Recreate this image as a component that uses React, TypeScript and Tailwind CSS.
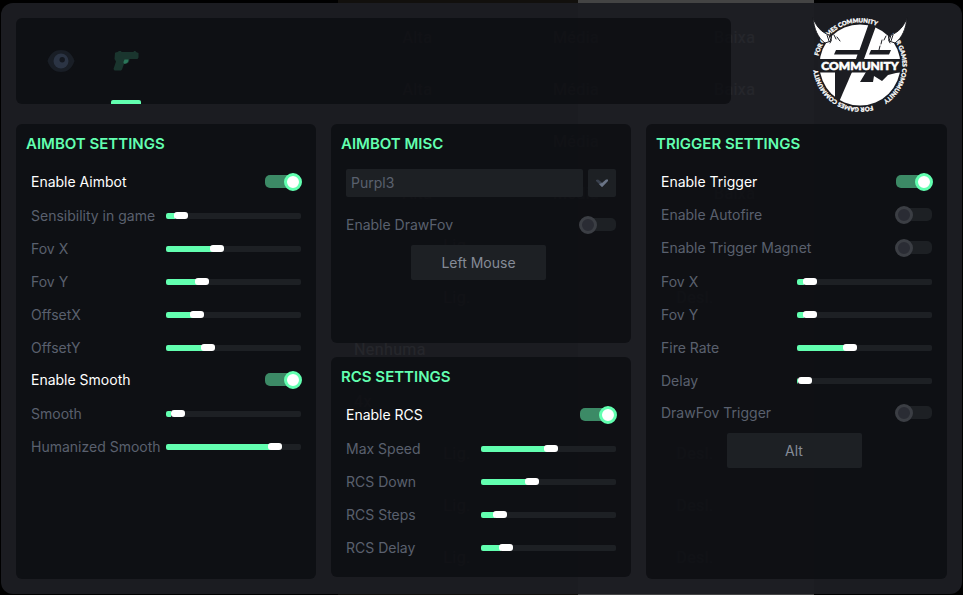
import { useState } from "react";
import type { CSSProperties, ReactNode } from "react";

/* Rows of the game menu that shimmer through the translucent overlay. */
const backdropRows: string[][] = [
  ["Alta", "Média", "Baixa"],
  ["Alta", "Média", "Baixa"],
  ["", "Média", ""],
  ["Alta", "Média", "Baixa"],
  ["Lig.", ""],
  ["Lig.", "Desl."],
  ["Nenhuma"],
  ["4x"],
  ["Lig.", "Desl."],
  ["Lig.", "Desl."],
  ["Lig.", "Desl."],
];

function Backdrop() {
  return (
    <div aria-hidden="true" className="absolute inset-0 overflow-hidden bg-black">
      <div className="ml-[338px] flex h-full w-[476px] flex-col bg-[linear-gradient(90deg,#12100d_240px,#444444_240px)] pt-3 font-['Roboto','Liberation_Sans',sans-serif] text-base leading-4 tracking-wide text-white">
        {backdropRows.map((cells, i) => (
          <div key={i} className="flex h-[52px] shrink-0 items-center">
            {cells.map((cell, j) => (
              <span
                key={j}
                className={cells.length === 1 ? "pl-4" : "flex-1 text-center"}
              >
                {cell}
              </span>
            ))}
          </div>
        ))}
      </div>
    </div>
  );
}

function Panel({ title, className = "", children }: { title: string; className?: string; children: ReactNode }) {
  return (
    <section className={`rounded-md bg-[#0b0c10]/75 pt-2 pb-[14px] ${className}`}>
      <h2 className="mb-[9px] px-[10px] text-[15px] leading-6 font-semibold text-[#62ffb0]">{title}</h2>
      <div className="px-[15px]">{children}</div>
    </section>
  );
}

function Toggle({ label, on = false }: { label: string; on?: boolean }) {
  const [checked, setChecked] = useState(on);
  return (
    <label
      className={`flex h-[33px] items-center justify-between text-sm ${checked ? "text-white" : "text-[#5a606e]"}`}
    >
      {label}
      <input
        type="checkbox"
        checked={checked}
        onChange={(e) => setChecked(e.target.checked)}
        className="flex h-[13px] w-9 appearance-none items-center rounded-[5px] bg-[#1d2024] before:-ml-px before:size-[18px] before:shrink-0 before:rounded-full before:border-3 before:border-[#3b3e44] before:bg-[#2a2c34] checked:bg-[#3c8a66] checked:before:ml-[19px] checked:before:border-[#62ffb0] checked:before:bg-white"
      />
    </label>
  );
}

function Slider({ label, start }: { label: string; start: number }) {
  const [value, setValue] = useState(start);
  const fill: CSSProperties = {
    background: `linear-gradient(90deg, #62ffb0 ${value}%, #1d2024 ${value}%)`,
  };
  return (
    <label className="flex h-[33px] items-center justify-between pt-[2px] text-sm whitespace-nowrap text-[#5a606e]">
      {label}
      <input
        type="range"
        min={0}
        max={100}
        value={value}
        onChange={(e) => setValue(Number(e.target.value))}
        style={fill}
        className="h-[6px] w-1/2 appearance-none rounded-xs [&::-webkit-slider-thumb]:h-[7px] [&::-webkit-slider-thumb]:w-[14px] [&::-webkit-slider-thumb]:appearance-none [&::-webkit-slider-thumb]:rounded-[3px] [&::-webkit-slider-thumb]:bg-white"
      />
    </label>
  );
}

function KeyButton({ children }: { children: ReactNode }) {
  return (
    <div className="mt-1 flex justify-center pr-[5px]">
      <button type="button" className="h-[35px] w-[135px] rounded-xs bg-[#1d2024] text-sm text-[#858b97]">
        {children}
      </button>
    </div>
  );
}

function EyeIcon() {
  return (
    <svg viewBox="0 0 28 24" className="h-6 w-7" aria-hidden="true">
      <path d="M0.500 12C3 4 8.500 1 14 1S25 4 27.500 12C25 20 19.500 23 14 23S3 20 0.500 12Z" fill="#191e26" />
      <circle cx="14" cy="12" r="7.500" fill="#2b3444" />
      <circle cx="15.200" cy="10.700" r="2.700" fill="#141820" />
    </svg>
  );
}

function PistolIcon() {
  return (
    <svg viewBox="0 0 28 24" className="h-6 w-7" aria-hidden="true">
      <path
        d="M3.500 3.500L5.500 3 7 2 9 2 9.500 3H21.500L22 2H23.500L24 3 26.500 4V8.500L25.500 10H17.500C17.500 13 16 15 12 15L10 20.500 9 21.500H2.500L1.500 20 4 12.500 2.500 10 3 4Z"
        fill="#1a352e"
      />
      <path d="M12.500 10.500H16.500C16.500 13.500 14.800 14.800 12 14.800L11.400 13.300Z" fill="#2a7659" />
    </svg>
  );
}

function Logo() {
  return (
    <svg viewBox="0 0 96 98" className="h-[98px] w-24" role="img" aria-label="For Games Community">
      <defs>
        <path id="ring" d="M5.500 49A42.500 42.500 0 0 1 90.500 49A42.500 42.500 0 0 1 5.500 49" />
        <path id="ringRight" d="M48 6.500A42.500 42.500 0 0 1 48 91.500A42.500 42.500 0 0 1 48 6.500" />
        <path id="ringBottom" d="M90.500 49A42.500 42.500 0 0 1 5.500 49A42.500 42.500 0 0 1 90.500 49" />
      </defs>
      <circle cx="48" cy="49" r="40.500" fill="#fff" />
      <g fill="#1c1d22">
        <path d="M57 7L64 10 52 43H44L45.500 38.500H22L24 34H47.500Z" />
        <path d="M59 34H79L77 38.500H57Z" />
        <path d="M6 43H90V56.500H6Z" />
        <path d="M23 56H40L27 86 23 83Z" />
        <path d="M54 56H88L76 59 70 65 62 60 61 66H48Z" />
      </g>
      <text
        x="48"
        y="54"
        textAnchor="middle"
        className="fill-white stroke-white stroke-[0.6] font-['Lato',sans-serif] text-[12px] font-black"
      >
        COMMUNITY
      </text>
      <g className="fill-white stroke-white stroke-[0.3] font-['Lato',sans-serif] text-[6px] font-black">
        <text>
          <textPath href="#ring" startOffset="9">FOR GAMES COMMUNITY</textPath>
        </text>
        <text>
          <textPath href="#ringRight" startOffset="34">FOR GAMES COMMUNITY</textPath>
        </text>
        <text>
          <textPath href="#ringBottom" startOffset="54">FOR GAMES COMMUNITY</textPath>
        </text>
      </g>
      <g strokeLinejoin="round" strokeLinecap="round">
        <path d="M1 2C4 10 9 16 17 19L19 25 13 27C6 22 2 13 1 2Z" fill="#fff" stroke="#1c1d22" />
        <path d="M95 2C92 10 87 16 79 19L77 25 83 27C90 22 94 13 95 2Z" fill="#fff" stroke="#1c1d22" />
        <path d="M15 19L17 25M18.500 17C20 21 20 24 18 27M22 19L24 23M25 21L28 25" fill="none" stroke="#1c1d22" />
        <path d="M81 19L79 25M77.500 17C76 21 76 24 78 27M74 20L72 24M70 24L69 28M68 30L67 34" fill="none" stroke="#1c1d22" />
      </g>
    </svg>
  );
}

export default function App() {
  return (
    <div className="relative flex min-h-screen flex-col bg-black px-px pt-[3px] pb-px font-['Inter','Liberation_Sans',sans-serif]">
      <Backdrop />
      <main className="relative flex flex-1 flex-col gap-5 rounded-xl bg-[#1c1d22]/96 p-[15px]">
        <header className="flex h-[86px]">
          <nav aria-label="Sections" className="flex flex-1 gap-[35px] rounded-md bg-[#0b0c10]/75 pl-[30px]">
            <button type="button" aria-label="Visuals" className="flex w-[30px] items-center justify-center">
              <EyeIcon />
            </button>
            <button
              type="button"
              aria-label="Aim"
              aria-current="page"
              className="flex w-[30px] flex-col items-center justify-between"
            >
              <span className="h-1" />
              <PistolIcon />
              <span className="h-1 w-full rounded-t-xs bg-[#62ffb0]" />
            </button>
          </nav>
          <div className="-mt-[2px] flex w-[216px] items-start justify-end pr-[39px]">
            <Logo />
          </div>
        </header>

        <div className="grid flex-1 grid-cols-[300fr_300fr_301fr] gap-[15px]">
          <Panel title="AIMBOT SETTINGS">
            <Toggle label="Enable Aimbot" on />
            <Slider label="Sensibility in game" start={7} />
            <Slider label="Fov X" start={36} />
            <Slider label="Fov Y" start={24} />
            <Slider label="OffsetX" start={20} />
            <Slider label="OffsetY" start={29} />
            <Toggle label="Enable Smooth" on />
            <Slider label="Smooth" start={4} />
            <Slider label="Humanized Smooth" start={84} />
          </Panel>

          <div className="flex flex-col gap-[14px] pb-[2px]">
            <Panel title="AIMBOT MISC" className="flex-1">
              <div className="mt-[13px] mb-[11px] flex h-7 gap-[5px]">
                <select
                  aria-label="Profile"
                  className="min-w-0 flex-1 appearance-none rounded-xs bg-[#1d2024] px-[5px] text-sm text-[#5a606e]"
                >
                  <option>Purpl3</option>
                </select>
                <button
                  type="button"
                  aria-label="Open profile list"
                  className="flex w-7 items-center justify-center rounded-xs bg-[#1d2024]"
                >
                  <svg viewBox="0 0 12 8" className="h-2 w-3" aria-hidden="true">
                    <path d="M0 1L2 0.500 6 3.500 7 7.500 6 7.800 0 2Z" fill="#3a414e" />
                    <path d="M10 0.500H12V2L6.500 7.800H5.500L3 5 6 4Z" fill="#6a7486" />
                  </svg>
                </button>
              </div>
              <Toggle label="Enable DrawFov" />
              <KeyButton>Left Mouse</KeyButton>
            </Panel>
            <Panel title="RCS SETTINGS">
              <Toggle label="Enable RCS" on />
              <Slider label="Max Speed" start={52} />
              <Slider label="RCS Down" start={36} />
              <Slider label="RCS Steps" start={10} />
              <Slider label="RCS Delay" start={15} />
            </Panel>
          </div>

          <Panel title="TRIGGER SETTINGS">
            <Toggle label="Enable Trigger" on />
            <Toggle label="Enable Autofire" />
            <Toggle label="Enable Trigger Magnet" />
            <Slider label="Fov X" start={5} />
            <Slider label="Fov Y" start={5} />
            <Slider label="Fire Rate" start={38} />
            <Slider label="Delay" start={1} />
            <Toggle label="DrawFov Trigger" />
            <KeyButton>Alt</KeyButton>
          </Panel>
        </div>
      </main>
    </div>
  );
}
